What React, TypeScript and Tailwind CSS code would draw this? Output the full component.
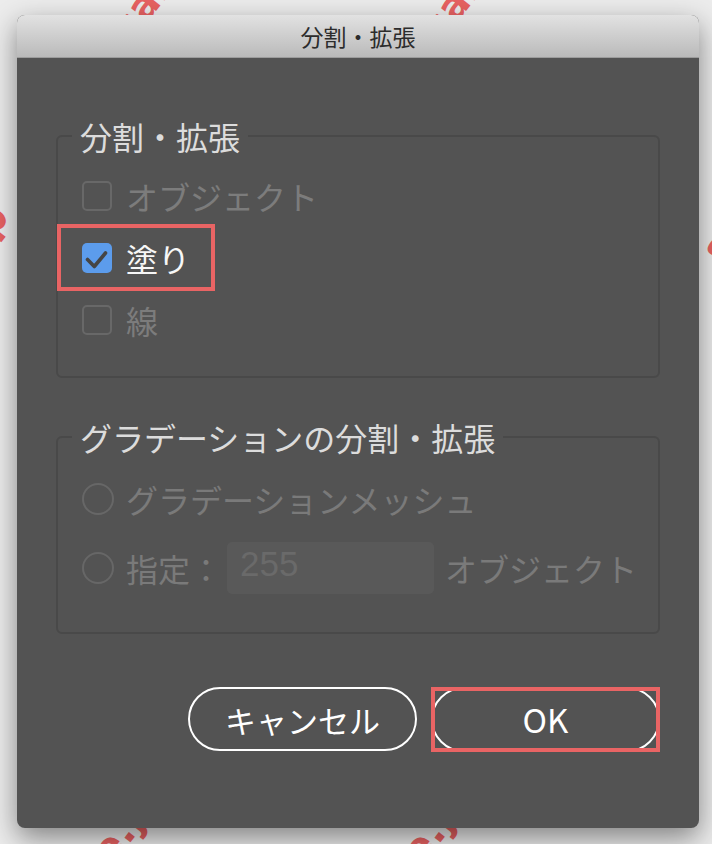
const jp = "font-['Hiragino_Sans','Noto_Sans_CJK_JP','Noto_Sans',sans-serif]";

function CheckBox({ checked }: { checked?: boolean }) {
  if (!checked) {
    return <span className="block h-[30px] w-[30px] shrink-0 rounded-[5px] border-2 border-[#686868]" />;
  }
  return (
    <span className="block h-[30px] w-[30px] shrink-0 rounded-[5px] bg-[#5c9cec]">
      <svg viewBox="0 0 30 30" className="h-[30px] w-[30px]">
        <path
          d="M5.5 16.5 L12.3 23.5 L23.5 10"
          fill="none"
          stroke="#454545"
          strokeWidth="3.6"
          strokeLinecap="round"
          strokeLinejoin="round"
        />
      </svg>
    </span>
  );
}

function Radio() {
  return <span className="block h-[32px] w-[32px] shrink-0 rounded-full border-2 border-[#676767]" />;
}

function Watermark({ className }: { className: string }) {
  return (
    <span
      className={`absolute whitespace-nowrap text-[40px] font-bold leading-none text-[#e86262] font-['DejaVu_Sans',sans-serif] ${className}`}
    >
      sample.jp
    </span>
  );
}

export default function App() {
  return (
    <div className={`relative h-[844px] w-[712px] overflow-hidden bg-[#ececec] ${jp}`}>
      <Watermark className="left-[78px] top-[-72px] -rotate-[52deg]" />
      <Watermark className="left-[388px] top-[-72px] -rotate-[52deg]" />
      <Watermark className="left-[-178px] top-[275px] -rotate-[52deg]" />
      <Watermark className="left-[-192px] top-[495px] -rotate-[52deg]" />
      <Watermark className="left-[668px] top-[150px] -rotate-[52deg]" />
      <Watermark className="left-[-25px] top-[858px] -rotate-[52deg]" />
      <Watermark className="left-[285px] top-[858px] -rotate-[52deg]" />

      <div className="relative z-10 pl-[17px] pt-[15px]">
        <div className="flex h-[813px] w-[682px] flex-col overflow-hidden rounded-[8px] bg-[#535353] shadow-[0_10px_28px_rgba(0,0,0,0.45)]">
          {/* title bar */}
          <div className="flex h-[43px] shrink-0 items-center justify-center border-b border-[#9c9c9c] bg-gradient-to-b from-[#e2e2e2] to-[#bababa] text-[23px] text-[#2c2c2c]">
            分割・拡張
          </div>

          <div className="flex flex-col px-[39px] pt-[55px]">
            <fieldset className="rounded-[6px] border-2 border-[#494949] pb-[33px] pl-[24px] pr-[8px] pt-[14px]">
              <legend className="-ml-[10px] px-[8px] text-[32px] leading-[46px] text-[#dcdcdc]">
                分割・拡張
              </legend>
              <div className="flex flex-col gap-[16px]">
                <div className="flex h-[46px] items-center gap-[14px] text-[32px] leading-none text-[#7c7c7c]">
                  <CheckBox />
                  <span>オブジェクト</span>
                </div>
                <div className="relative flex h-[46px] items-center gap-[14px] text-[32px] leading-none text-[#f7f7f7]">
                  <CheckBox checked />
                  <span>塗り</span>
                  <span className="absolute -left-[25px] -top-[11px] h-[67px] w-[158px] border-4 border-[#e96464]" />
                </div>
                <div className="flex h-[46px] items-center gap-[14px] text-[32px] leading-none text-[#7c7c7c]">
                  <CheckBox />
                  <span>線</span>
                </div>
              </div>
            </fieldset>

            <fieldset className="mt-[36px] rounded-[6px] border-2 border-[#494949] pb-[38px] pl-[24px] pr-[8px] pt-[16px]">
              <legend className="-ml-[10px] px-[8px] text-[32px] leading-[46px] text-[#dcdcdc]">
                グラデーションの分割・拡張
              </legend>
              <div className="flex flex-col gap-[20px]">
                <div className="flex h-[46px] items-center gap-[12px] whitespace-nowrap text-[32px] leading-none text-[#7a7a7a]">
                  <Radio />
                  <span>グラデーションメッシュ</span>
                </div>
                <div className="flex h-[52px] items-center whitespace-nowrap text-[32px] leading-none text-[#7a7a7a]">
                  <Radio />
                  <span className="ml-[12px] shrink-0">指定：</span>
                  <div className="ml-[5px] h-[52px] w-[207px] shrink-0 rounded-[5px] bg-[#595959] pl-[13px] pt-[4px] font-['Liberation_Sans',sans-serif] text-[35px] leading-none text-[#6a6a6a]">
                    255
                  </div>
                  <span className="ml-[11px] shrink-0">オブジェクト</span>
                </div>
              </div>
            </fieldset>

            <div className="mt-[53px] flex justify-end gap-[14px]">
              <button className="flex h-[64px] w-[229px] items-center justify-center rounded-full border-2 border-white text-[31px] leading-none text-white">
                キャンセル
              </button>
              <div className="relative h-[65px] w-[229px]">
                <button className="flex h-full w-full items-center justify-center rounded-full border-2 border-white text-[33px] leading-none text-white">
                  OK
                </button>
                <span className="absolute inset-0 border-4 border-[#e96464]" />
              </div>
            </div>
          </div>
        </div>
      </div>
    </div>
  );
}
